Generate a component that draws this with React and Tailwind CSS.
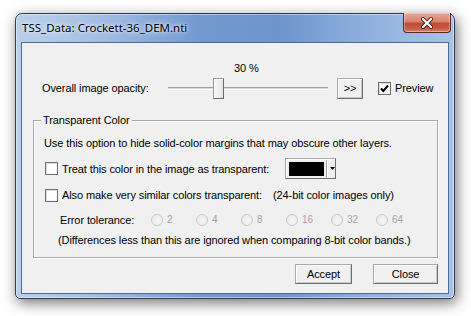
import React from "react";

function Check({ checked }) {
  return (
    <div className="w-[13px] h-[13px] shrink-0 border border-[#707070] bg-white shadow-[inset_1px_1px_0_#dcdcdc,inset_-1px_-1px_0_#f4f4f4] flex items-center justify-center">
      {checked && (
        <svg width="11" height="11" viewBox="0 0 11 11">
          <path d="M2 5.5 L4.3 8 L9 2.5" stroke="#000" strokeWidth="2" fill="none" />
        </svg>
      )}
    </div>
  );
}

function Radio({ label }) {
  return (
    <div className="w-[45px] flex items-center shrink-0">
      <div className="w-[12px] h-[12px] rounded-full border border-[#c9c9c9] bg-[radial-gradient(circle_at_60%_60%,#f6f6f6,#e6e6e6)] shrink-0" />
      <span className="ml-[4px] text-[10px] text-[#a3a3a3]">{label}</span>
    </div>
  );
}

function Btn({ children, className }) {
  return (
    <div
      className={
        "flex items-center justify-center border border-[#a9a9a9] border-r-[#6e6e6e] border-b-[#6e6e6e] bg-[#f0f0f0] shadow-[inset_1px_1px_0_#ffffff,inset_-1px_-1px_0_#c8c8c8] text-black " +
        className
      }
    >
      {children}
    </div>
  );
}

export default function App() {
  return (
    <div className="w-[471px] h-[316px] bg-white pt-[13px] pl-[15px] font-['Liberation_Sans',Arial,sans-serif] text-[11px] tracking-[-0.1px] text-black leading-[14px] whitespace-nowrap">
      <div className="w-[440px] h-[286px] rounded-t-[7px] rounded-b-[5px] border border-[#2f3d52] bg-[linear-gradient(to_right,#b9cfea_0%,#a9c3e6_15%,#7399d0_42%,#6d94ce_60%,#8eb0de_80%,#a9c3e7_100%)] flex flex-col px-[5px] pb-[4px] shadow-[inset_0_0_0_1px_rgba(255,255,255,0.45),2px_4px_14px_rgba(0,0,0,0.55)]">
        {/* title bar */}
        <div className="h-[28px] flex items-start justify-between shrink-0">
          <div className="mt-[6px] ml-[1px] font-['Noto_Sans',sans-serif] text-[11.5px] tracking-normal leading-[16px] text-black [text-shadow:0_0_6px_rgba(255,255,255,0.95),0_0_3px_rgba(255,255,255,0.9)]">
            TSS_Data: Crockett-36_DEM.nti
          </div>
          <div className="-mt-[1px] -mr-[2px] w-[48px] h-[20px] rounded-b-[4px] border border-[#5b2a26] border-t-0 bg-[linear-gradient(to_bottom,#e8a797_0%,#d8826f_45%,#c34a36_55%,#c8604a_85%,#d88a70_100%)] shadow-[inset_0_0_0_1px_rgba(255,255,255,0.35)] flex items-center justify-center">
            <svg width="16" height="14" viewBox="0 0 16 14">
              <path d="M4 3 L12 11 M12 3 L4 11" stroke="#4a2020" strokeWidth="4" strokeLinecap="round" />
              <path d="M4 3 L12 11 M12 3 L4 11" stroke="#ffffff" strokeWidth="2.2" strokeLinecap="round" />
            </svg>
          </div>
        </div>
        {/* client */}
        <div className="flex-1 border border-[#4e6a92] bg-[#f0f0f0] flex flex-col">
          <div className="mt-[19px] h-[13px] pl-[212px] leading-[13px]">30 %</div>
          <div className="mt-[2px] h-[22px] flex items-center">
            <div className="ml-[20px] w-[126px]">Overall image opacity:</div>
            <div className="relative w-[160px] h-[22px]">
              <div className="absolute left-0 right-0 top-[10px] h-[3px] border-t border-[#a0a0a0] border-b border-b-[#ffffff] bg-[#dcdcdc]" />
              <div className="absolute left-[45px] top-[1px] w-[11px] h-[21px] border border-[#9a9a9a] border-r-[#6a6a6a] border-b-[#6a6a6a] bg-[linear-gradient(to_right,#f6f6f6,#e6e6e6)] shadow-[inset_1px_1px_0_#fff]" />
            </div>
            <Btn className="ml-[9px] w-[26px] h-[21px]">&gt;&gt;</Btn>
            <div className="ml-[15px] flex items-center">
              <Check checked />
              <span className="ml-[4px]">Preview</span>
            </div>
          </div>
          {/* group box */}
          <div className="relative mt-[21px] ml-[11px] w-[405px] h-[138px] border border-[#a9a9a9] shadow-[inset_1px_1px_0_#fff,1px_1px_0_#fff] flex flex-col">
            <div className="absolute -top-[8px] left-[7px] px-[2px] bg-[#f0f0f0] leading-[14px]">Transparent Color</div>
            <div className="mt-[15px] h-[14px] ml-[10px] flex items-center">
              Use this option to hide solid-color margins that may obscure other layers.
            </div>
            <div className="mt-[8px] h-[21px] ml-[11px] flex items-center">
              <Check />
              <span className="ml-[4px] w-[223px]">Treat this color in the image as transparent:</span>
              <div className="w-[51px] h-[21px] border border-[#a9a9a9] border-r-[#6e6e6e] border-b-[#6e6e6e] bg-[#f0f0f0] shadow-[inset_1px_1px_0_#fff] flex items-center pl-[3px]">
                <div className="w-[35px] h-[14px] bg-black" />
                <div className="ml-[2px] w-[1px] h-[17px] bg-[#a0a0a0] shadow-[1px_0_0_#fff]" />
                <svg className="ml-[3px]" width="5" height="3" viewBox="0 0 5 3">
                  <path d="M0 0 H5 L2.5 3 Z" fill="#000" />
                </svg>
              </div>
            </div>
            <div className="mt-[9px] h-[14px] ml-[11px] flex items-center">
              <Check />
              <span className="ml-[4px] w-[211px]">Also make very similar colors transparent:</span>
              <span>(24-bit color images only)</span>
            </div>
            <div className="mt-[11px] h-[14px] ml-[26px] flex items-center">
              <span className="w-[91px]">Error tolerance:</span>
              <Radio label="2" />
              <Radio label="4" />
              <Radio label="8" />
              <Radio label="16" />
              <Radio label="32" />
              <Radio label="64" />
            </div>
            <div className="mt-[6px] h-[14px] ml-[24px] flex items-center">
              (Differences less than this are ignored when comparing 8-bit color bands.)
            </div>
          </div>
          <div className="mt-[6px] pr-[10px] flex justify-end">
            <Btn className="w-[57px] h-[20px]">Accept</Btn>
            <Btn className="ml-[21px] w-[65px] h-[20px]">Close</Btn>
          </div>
        </div>
      </div>
    </div>
  );
}
